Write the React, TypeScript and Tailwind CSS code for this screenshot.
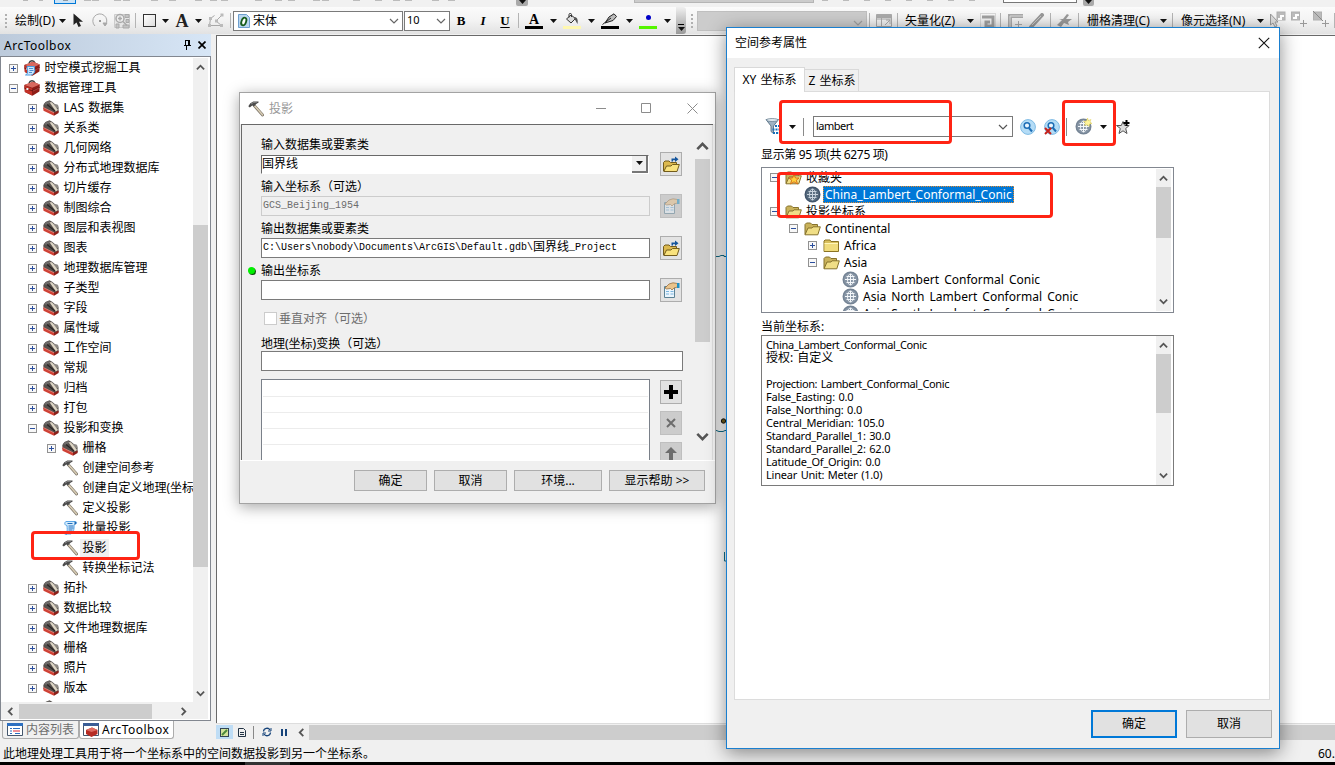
import type { ReactNode } from "react";
import clsx from "clsx";

/* ---------- small shared pieces ---------- */

const Caret = () => (
  <svg width="7" height="4" viewBox="0 0 7 4" className="shrink-0"><path d="M0 0h7L3.5 4z" fill="#111" /></svg>
);

const Chevron = ({ dir, size = 9, color = "#555", sw = 2 }: { dir: "up" | "down" | "left" | "right"; size?: number; color?: string; sw?: number }) => {
  const d = {
    up: "M1 7L5 3L9 7",
    down: "M1 3L5 7L9 3",
    left: "M7 1L3 5L7 9",
    right: "M3 1L7 5L3 9",
  }[dir];
  return (
    <svg width={size} height={size} viewBox="0 0 10 10" className="shrink-0" fill="none" stroke={color} strokeWidth={sw}>
      <path d={d} />
    </svg>
  );
};

const Cell = ({ w, className, children }: { w: string; className?: string; children?: ReactNode }) => (
  <div className={clsx("flex h-full shrink-0 items-center justify-center", w, className)}>{children}</div>
);

const Sep = ({ w = "w-[5px]" }: { w?: string }) => (
  <Cell w={w}><div className="h-[15px] w-px bg-[#b4b4b4]" /></Cell>
);

const Grip = ({ w }: { w: string }) => (
  <Cell w={w}>
    <div className="flex flex-col gap-[2px]">
      {[0, 1, 2, 3].map(i => <div key={i} className="size-[2px] bg-[#b0b0b0]" />)}
    </div>
  </Cell>
);

/* ---------- tree icons ---------- */

const Expander = ({ open }: { open: boolean }) => (
  <svg width="9" height="9" viewBox="0 0 9 9" shapeRendering="crispEdges" className="shrink-0">
    <rect x="0.5" y="0.5" width="8" height="8" fill="#f8f8f8" stroke="#919191" />
    <path d={open ? "M2 4.5h5" : "M2 4.5h5M4.5 2v5"} stroke="#2b4f9e" />
  </svg>
);

const ToolboxIcon = ({ script }: { script?: boolean }) => (
  <svg width="16" height="16" viewBox="0 0 16 16" className="shrink-0">
    <path d="M5 3C6 0 10 0 11 3" fill="none" stroke="#3b3b3b" strokeWidth="1.3" />
    <path d="M0.3 5L9 1.8L15.8 4.6L15.4 11.5L8.5 15.7L0.8 12z" fill="#8f1d17" />
    <path d="M0.3 5L9 1.8L15.8 4.6L8.2 7.8z" fill="#d8695f" />
    <path d="M0.4 5.6L8 8.4V15.4L0.9 12z" fill="#c33127" />
    <path d="M0.4 8L8 10.8L15.7 7.4" stroke="#5c110d" strokeWidth="0.8" fill="none" />
    <rect x="2.4" y="8" width="2" height="2" fill="#eee" />
    <path d="M9 11L15 8" stroke="#b55" strokeWidth="0.7" />
    {script && (
      <>
        <path d="M3 6.5h7.5c-1 2 1 3.5 0 5.5c-1 2-2 3-4 3H1.5c2-1 2.5-2.5 2-4.5z" fill="#cfe8fb" stroke="#4a9be0" strokeWidth="1" />
        <path d="M5 8.5h4M5.5 10.5h4M5 12.5h3" stroke="#3d85cf" strokeWidth="0.9" />
      </>
    )}
  </svg>
);

const ToolsetIcon = () => (
  <svg width="16" height="16" viewBox="0 0 16 16" className="shrink-0">
    <path d="M0.3 5L2.5 2L6.5 0.3L9.5 2L15.5 7.5V12L11 15L0.5 9z" fill="#55504d" />
    <path d="M0.8 4L3.5 1.8L6.5 1L7.5 2.5L4 5z" fill="#6d6a68" />
    <path d="M9 3.500L14.500 4.500L15.500 6V8.500L12 7.500z" fill="#8b8783" />
    <path d="M6.500 2.200L9 2.200L15 10L12.800 11.500z" fill="#ddd5c4" />
    <path d="M4 4.500L12 11" stroke="#2a2625" strokeWidth="1.200" />
    <path d="M0.300 7.500L11 12.800V15.800L0.500 10.800z" fill="#cf4135" />
    <path d="M0.300 7.500L11 12.800" stroke="#e98a80" strokeWidth="0.800" />
    <path d="M11 12.800L15.600 10.500V13L11 15.800z" fill="#8b1e18" />
  </svg>
);

const HammerIcon = () => (
  <svg width="16" height="16" viewBox="0 0 16 16" className="shrink-0">
    <path d="M6.4 4.8L14.6 14" stroke="#7a7266" strokeWidth="2.8" strokeLinecap="round" />
    <path d="M6.4 4.6L14.5 13.8" stroke="#d8cdb4" strokeWidth="1.6" strokeLinecap="round" />
    <path d="M0.300 5.200L2.300 2.200L5.300 0.600L10.500 0.400L10.600 1.600L8.200 3L6 5.600L4.200 4.600L1.800 6.600z" fill="#4b4b4b" />
    <path d="M3 3L5.500 1.500L9 1" stroke="#a5a5a5" strokeWidth="0.700" fill="none" />
  </svg>
);

const ScriptIcon = () => (
  <svg width="16" height="16" viewBox="0 0 16 16" className="shrink-0">
    <path d="M4 1.500H13.500C15.500 2 14.500 4.500 12.500 4.200C11.500 7.500 13 11 9 14H4C6 11 5 8 5 5.500C2.500 5.500 2 2.500 4 1.500z" fill="#d4ebfc" stroke="#5aa6e6" />
    <path d="M2 11.500C1.500 13.500 3 15 5 14.500" fill="none" stroke="#5aa6e6" />
    <path d="M5.500 3.500h5M6.500 6h5M6.500 8h5M6.500 10h4M6.500 12h3" stroke="#2270bd" strokeWidth="1.100" />
    <path d="M12.500 1.500c2.500 0 2.500 3 0 3z" fill="#1f66b0" />
  </svg>
);

const FolderIcon = ({ open, star }: { open?: boolean; star?: boolean }) => (
  <svg width="17" height="14" viewBox="0 0 17 14" className="shrink-0">
    {open ? (
      <>
        <path d="M1 12.5V2.5L2.5 1H6.5L8 2.5H13.5V5" fill="#c9b25a" stroke="#86722c" />
        <path d="M1 12.8L4 6H8L9 4.8H16.3L13.8 12.8z" fill="#f0de86" stroke="#86722c" />
      </>
    ) : (
      <>
        <path d="M1 12.5V2L2 1H7L8 2.5H15.5V12.5z" fill="#d8bf5c" stroke="#8b7424" />
        <path d="M1.5 4.5H15V12H1.5z" fill="#f0dc7c" />
        <path d="M1.5 4.5H15" stroke="#fff6b8" />
      </>
    )}
    {star && <path d="M9 3.500L10.500 7H14L11.300 9.200L12.500 13L9 10.800L5.500 13L6.700 9.200L4 7H7.500z" fill="#ffcf3a" stroke="#d5701a" />}
  </svg>
);

const GlobeIcon = ({ dark, spark }: { dark?: boolean; spark?: boolean }) => (
  <svg width="17" height="17" viewBox="0 0 17 17" className="shrink-0">
    <circle cx="8.500" cy="8.500" r="7.300" fill={dark ? "#566a7d" : "#8795a5"} stroke={dark ? "#41546a" : "#748394"} strokeWidth="1.400" />
    <g fill="none" stroke={dark ? "#c9d4de" : "#f4f7fa"} strokeWidth="1">
      <path d="M8.500 3V14M3 8.500H14M4.500 5.500H12.500M4.500 11.500H12.500" />
      <ellipse cx="8.500" cy="8.500" rx="3" ry="5.500" />
    </g>
    {spark && <path d="M12.5 0L13.4 2.5L16 1.5L15 4L17 5.500L14.500 6L14 8.500L12.200 6.700L9.500 7.500L10.500 5L8.500 3.500L11.500 3z" fill="#fff59a" stroke="#dccb52" strokeWidth="0.500" />}
  </svg>
);

/* ---------- top toolbars ---------- */

// last pixels of the toolbar row above the drawing toolbar
const SPECKS = [8, 22, 9, 28, 18, 26, 15, 11, 34, 20, 13, 25, 9, 31, 22, 18, 12, 27, 16, 24];

const ClippedToolbar = () => (
  <div className="flex h-[7px] shrink-0 items-start bg-[#f1f1f1]">
    <div className="flex h-[2px] w-[54px] gap-[11px] overflow-hidden pl-[23px]">
      <i className="h-px w-[5px] bg-[#b8b8b8]" /><i className="h-px w-[4px] bg-[#bbb]" />
    </div>
    <div className="flex h-[4px] w-[22px] justify-center border border-t-0 border-[#0078d7] bg-[#cce4f7]"><i className="h-px w-[5px] bg-[#8d9ba6]" /></div>
    <div className="flex h-[2px] w-[440px] overflow-hidden pl-2">
      {SPECKS.map((s, i) => (
        <div key={i} style={{ width: s }} className="shrink-0"><div className="h-px w-[7px] bg-[#bcbcbc]" /></div>
      ))}
    </div>
    <div className="flex h-[6px] w-[12px] justify-center rounded-b-[2px] bg-[#aaa]"><Caret /></div>
    <div className="w-[106px]" />
    <div className="h-[3px] w-[180px] border border-t-0 border-[#b5b5b5] bg-[#ccc]" />
    <div className="flex h-[2px] w-[189px] gap-[15px] overflow-hidden pl-2">
      {[0, 1, 2, 3, 4, 5, 6, 7].map(i => <i key={i} className="h-px w-[6px] shrink-0 bg-[#bbb]" />)}
    </div>
    <div className="h-[3px] w-[74px] border border-t-0 border-[#777] bg-white" />
    <div className="w-[6px]" />
    <div className="flex h-[6px] w-[11px] justify-center rounded-b-[2px] bg-[#aaa]"><Caret /></div>
  </div>
);

const DrawToolbar = () => (
  <div className="flex h-[27px] shrink-0 items-center overflow-hidden bg-gradient-to-b from-[#fbfbfb] via-[#f3f3f3] to-[#e2e2e2] text-[12px]">
    <Grip w="w-[12px]" />
    <Cell w="w-[46px]">绘制(D)</Cell>
    <Cell w="w-[9px]"><Caret /></Cell>
    <Cell w="w-[23px]">
      <svg width="11" height="15" viewBox="0 0 11 15"><path d="M0.500 0.500V12L3.500 9.500L5.500 14L8 13L6 8.700H10z" fill="#222" /></svg>
    </Cell>
    <Cell w="w-[20px]">
      <svg width="16" height="16" viewBox="0 0 16 16" fill="none" stroke="#a8a8a8">
        <path d="M3 13A7 7 0 1 1 13.500 12" /><path d="M11 10h4l-2 3z" fill="#a8a8a8" /><rect x="7" y="7" width="2" height="2" fill="#999" stroke="none" />
      </svg>
    </Cell>
    <Cell w="w-[23px]">
      <svg width="16" height="16" viewBox="0 0 16 16" fill="none" stroke="#aaa">
        <path d="M0.500 1.500h15v13h-15z" fill="#e6e6e6" stroke="#ccc" />
        <path d="M11 1.500h4v3h-4zM12 6.500h3v3h-3zM2 11h3v4h-3zM9 12h6v3h-6z" fill="#c4c4c4" />
        <circle cx="6" cy="5.500" r="4" fill="#eee" strokeWidth="1.500" /><path d="M4 5.500h4M6 3.500v4M9 8.500l4 4" strokeWidth="1.500" />
      </svg>
    </Cell>
    <Sep />
    <Cell w="w-[23px]"><div className="h-[13px] w-[13px] border border-[#333] bg-gradient-to-br from-white to-[#ddd]" /></Cell>
    <Cell w="w-[9px]"><Caret /></Cell>
    <Cell w="w-[24px]" className="font-['Liberation_Serif',serif] text-[18px] leading-none font-bold text-[#222]">A</Cell>
    <Cell w="w-[9px]"><Caret /></Cell>
    <Cell w="w-[25px]">
      <svg width="17" height="15" viewBox="0 0 17 15" fill="none" stroke="#a8a8a8">
        <path d="M2.500 12.500L3.500 5.500L7.500 2.500M15 2L9 8L14.500 12.500H2.500" />
        <path d="M1 11h3v3H1zM2 4h3v3H2zM13 11h3v3h-3zM8 6.500h3v3H8zM13.500 0.500h3v3h-3z" fill="#bbb" stroke="none" />
      </svg>
    </Cell>
    <Sep />
    <Cell w="w-[170px]">
      <div className="flex h-[20px] w-full items-center border border-[#7a7a7a] bg-white pr-[3px] pl-[4px]">
        <svg width="12" height="14" viewBox="0 0 12 14" className="shrink-0">
          <path d="M0.500 0.500h8l3 3v10h-11z" fill="#b9d6ef" stroke="#6d9fce" />
          <ellipse cx="5.800" cy="7.500" rx="2.300" ry="4" transform="rotate(20 5.800 7.500)" fill="#fff" stroke="#175c1c" strokeWidth="1.800" />
        </svg>
        <span className="ml-[3px] flex-1">宋体</span>
        <Chevron dir="down" color="#666" sw={1.2} size={10} />
      </div>
    </Cell>
    <Cell w="w-[47px]">
      <div className="ml-px flex h-[20px] w-[46px] items-center border border-[#7a7a7a] bg-white pr-[3px] pl-[2px]">
        <span className="flex-1 pb-px text-[11px]">10</span>
        <Chevron dir="down" color="#666" sw={1.2} size={10} />
      </div>
    </Cell>
    <Cell w="w-[22px]" className="font-['Liberation_Serif',serif] text-[13px] font-bold">B</Cell>
    <Cell w="w-[22px]" className="font-['Liberation_Serif',serif] text-[13px] font-bold italic">I</Cell>
    <Cell w="w-[22px]" className="font-['Liberation_Serif',serif] text-[13px] font-bold underline underline-offset-2">U</Cell>
    <Sep />
    <Cell w="w-[26px]" className="flex-col">
      <span className="h-[13px] font-['Liberation_Serif',serif] text-[14px] leading-[13px] font-bold">A</span>
      <div className="h-[3px] w-[18px] bg-black" />
    </Cell>
    <Cell w="w-[12px]"><Caret /></Cell>
    <Cell w="w-[26px]" className="flex-col">
      <svg width="14" height="13" viewBox="0 0 14 13"><path d="M1.500 6L6 2L10.500 5.500L6 10z" fill="#ddd" stroke="#333" /><path d="M4 4.500V1.500C4 0 6.500 0 6.500 1.500V4" stroke="#333" fill="none" /><path d="M10 4C13 5 13 8 12.500 11C11 9 11 7 9 6z" fill="#555" /></svg>
      <div className="h-[3px] w-[18px] bg-[#fff8b0]" />
    </Cell>
    <Cell w="w-[12px]"><Caret /></Cell>
    <Cell w="w-[26px]" className="flex-col">
      <svg width="16" height="13" viewBox="0 0 16 13"><path d="M3 10L7 4L12 0.800L14.500 3.500L11 7.500z" fill="#bbb" stroke="#222" /><path d="M0.500 11.500L9 5" stroke="#222" /></svg>
      <div className="h-[3px] w-[18px] bg-black" />
    </Cell>
    <Cell w="w-[12px]"><Caret /></Cell>
    <Cell w="w-[26px]" className="flex-col">
      <div className="flex h-[13px] items-start pt-[2px]"><div className="size-[5px] rounded-full bg-[#0000c8]" /></div>
      <div className="h-[3px] w-[18px] bg-[#55f500]" />
    </Cell>
    <Cell w="w-[12px]"><Caret /></Cell>
    <div className="w-[3px] shrink-0" />
    <Cell w="w-[10px]" className="flex-col justify-end gap-[2px] rounded-r-[3px] bg-gradient-to-b from-[#f0f0f0] to-[#999] pb-[3px]">
      <div className="h-px w-[6px] shrink-0 bg-black" /><Caret />
    </Cell>
    <Grip w="w-[11px]" />
    <Cell w="w-[170px]">
      <div className="flex h-[20px] w-full items-center justify-end border border-[#bfbfbf] bg-[#ccc] pt-[5px] pr-[3px]"><Chevron dir="down" color="#a0a0a0" sw={1.2} size={10} /></div>
    </Cell>
    <Sep />
    <Cell w="w-[23px]">
      <svg width="16" height="13" viewBox="0 0 16 13" fill="none" stroke="#aaa"><path d="M0.500 1.500h15v11H0.500zM5.500 4v8M0.500 5h15" /><path d="M0.500 0.500h15v3H0.500z" fill="#aaa" /><path d="M9 11l5-5M10 6h4v4" /></svg>
    </Cell>
    <Sep />
    <Cell w="w-[63px]" className="justify-start pl-[5px]">矢量化(Z)</Cell>
    <Cell w="w-[14px]"><Caret /></Cell>
    <Cell w="w-[21px]">
      <svg width="16" height="16" viewBox="0 0 16 16" fill="none"><rect x="0.500" y="0.500" width="15" height="15" stroke="#bbb" strokeDasharray="1 1" /><path d="M2 4h11v9H6V9h4" stroke="#a0a0a0" strokeWidth="3" /></svg>
    </Cell>
    <Sep />
    <Cell w="w-[23px]">
      <svg width="16" height="16" viewBox="0 0 16 16" fill="none"><path d="M3 16V3h13" stroke="#aaa" strokeWidth="4" /><path d="M3 16V3h13" stroke="#ddd" /><path d="M8 11.500h7M11.500 8v7" stroke="#aaa" /></svg>
    </Cell>
    <Cell w="w-[22px]">
      <svg width="16" height="16" viewBox="0 0 16 16" fill="none"><path d="M2 14L13 2" stroke="#999" strokeWidth="4" strokeLinecap="round" /><path d="M3 12L12 3" stroke="#c8c8c8" strokeWidth="1" /></svg>
    </Cell>
    <Sep />
    <Cell w="w-[23px]">
      <svg width="16" height="14" viewBox="0 0 16 14" fill="#9a9a9a"><path d="M0 11L5 6L2 5H6L10 0L12 1L9 5H15L11 8L12 11L7 9L4 13z" /></svg>
    </Cell>
    <Sep />
    <Cell w="w-[76px]" className="justify-start pl-[6px]">栅格清理(C)</Cell>
    <Cell w="w-[13px]"><Caret /></Cell>
    <Sep />
    <Cell w="w-[78px]" className="justify-start pl-[6px]">像元选择(N)</Cell>
    <Cell w="w-[14px]"><Caret /></Cell>
    <Cell w="w-[21px]" className="pb-1">
      <svg width="16" height="16" viewBox="0 0 16 16" fill="none" stroke="#b0b0b0"><rect x="7" y="1" width="8" height="8" fill="#bbb" /><path d="M8 8h3V5h3" stroke="#fff" strokeWidth="2" /><path d="M0.500 3V14L3 12L5 16L7 15L5 11H8z" fill="#ddd" stroke="#999" /></svg>
    </Cell>
    <Cell w="w-[22px]" className="pb-1">
      <svg width="16" height="16" viewBox="0 0 16 16" fill="none" stroke="#b0b0b0"><rect x="0.500" y="1" width="8" height="8" fill="#bbb" /><path d="M2 7h3V4h3" stroke="#fff" strokeWidth="2" /><path d="M9 12.500h7M12.500 9v7" stroke="#999" /></svg>
    </Cell>
    <Cell w="w-[22px]" className="pb-1">
      <svg width="16" height="16" viewBox="0 0 16 16" fill="none" stroke="#b0b0b0"><rect x="0.500" y="1" width="8" height="8" fill="#bbb" /><path d="M0 0L10 10" stroke="#888" /><path d="M9 12.500h7M12.500 9v7" stroke="#999" /></svg>
    </Cell>
    <Cell w="w-[3px]" className="justify-end"><div className="h-[15px] w-px bg-[#b4b4b4]" /></Cell>
  </div>
);

/* ---------- left panel ---------- */

type Row = { level: number; kind: "box" | "sbox" | "set" | "tool" | "script"; text: string; open?: boolean; selected?: boolean };

const set = (text: string, level = 1): Row => ({ level, kind: "set", text });
const tool = (text: string): Row => ({ level: 2, kind: "tool", text });

const ROWS: Row[] = [
  { level: 0, kind: "sbox", text: "时空模式挖掘工具" },
  { level: 0, kind: "box", text: "数据管理工具", open: true },
  set("LAS 数据集"), set("关系类"), set("几何网络"), set("分布式地理数据库"), set("切片缓存"),
  set("制图综合"), set("图层和表视图"), set("图表"), set("地理数据库管理"), set("子类型"),
  set("字段"), set("属性域"), set("工作空间"), set("常规"), set("归档"), set("打包"),
  { level: 1, kind: "set", text: "投影和变换", open: true },
  set("栅格", 2),
  tool("创建空间参考"), tool("创建自定义地理(坐标"), tool("定义投影"),
  { level: 2, kind: "script", text: "批量投影" },
  { level: 2, kind: "tool", text: "投影", selected: true },
  tool("转换坐标记法"),
  set("拓扑"), set("数据比较"), set("文件地理数据库"), set("栅格"), set("照片"), set("版本"), set(""),
];

const INDENT = 19;

const TreeRow = ({ row }: { row: Row }) => (
  <div className="flex h-[20px] shrink-0 items-center" style={{ paddingLeft: 8 + row.level * INDENT }}>
    <div className="flex w-[15px] shrink-0 items-center">
      {row.text && row.kind !== "tool" && row.kind !== "script" && <Expander open={!!row.open} />}
    </div>
    {row.kind === "set" && <ToolsetIcon />}
    {row.kind === "box" && <ToolboxIcon />}
    {row.kind === "sbox" && <ToolboxIcon script />}
    {row.kind === "tool" && <HammerIcon />}
    {row.kind === "script" && <ScriptIcon />}
    <span className={clsx("ml-[2px] h-[18px] pr-[2px] pl-[2.5px] leading-[18px] whitespace-nowrap [word-spacing:1px]", row.selected && "bg-[#f0f0f0]")}>{row.text}</span>
  </div>
);

const Toolbox = () => (
  <div className="flex w-[211px] shrink-0 flex-col">
    <div className="flex h-[22px] items-center bg-gradient-to-r from-[#bccadb] to-[#d7e6f6] pr-[5px] pl-[4px]">
      <span className="flex-1 pt-[2px] text-[12px] tracking-[0.5px]">ArcToolbox</span>
      <svg width="8" height="10" viewBox="0 0 8 10" fill="none" stroke="#000" shapeRendering="crispEdges"><path d="M2 5V0.500h4V5M0.500 5.500h7M3.500 6v4M5.500 1v4" /></svg>
      <svg width="8" height="8" viewBox="0 0 8 8" className="ml-[7px]" stroke="#000" strokeWidth="1.700"><path d="M0.500 0.500l7 7M7.500 0.500l-7 7" /></svg>
    </div>
    <div className="flex h-[665px] flex-col border border-[#828790] bg-white">
      <div className="flex h-[645px] pt-px">
        <div className="flex w-[192px] shrink-0 flex-col overflow-hidden">
          {ROWS.map((r, i) => <TreeRow key={i} row={r} />)}
        </div>
        <div className="flex w-[15px] flex-col items-center bg-[#f0f0f0]">
          <div className="flex h-[167px] pt-[5px]"><Chevron dir="up" size={9} /></div>
          <div className="h-[342px] w-full bg-[#cdcdcd]" />
          <div className="flex flex-1 items-end pb-[4px]"><Chevron dir="down" size={9} /></div>
        </div>
      </div>
      <div className="mr-[2px] flex h-[17px] items-center bg-[#f0f0f0] pt-px">
        <div className="flex w-[18px] justify-center"><Chevron dir="left" size={9} /></div>
        <div className="h-[15px] w-[133px] bg-[#cdcdcd]" />
        <div className="flex w-[41px] justify-end pr-[5px]"><Chevron dir="right" size={9} /></div>
      </div>
    </div>
    <div className="flex h-[19px] items-start pl-[2px]">
      <div className="flex h-[18px] w-[77px] items-center rounded-b-[3px] border border-t-0 border-[#acacac] pl-[4px] text-[#6d6d6d]">
        <svg width="16" height="13" viewBox="0 0 16 13" className="shrink-0"><path d="M0.500 0.500h15v12H0.500z" fill="#fff" stroke="#44566c" /><path d="M0 0h16v3H0z" fill="#2d6fc0" /><path d="M3 5.500h2M3 8h2M3 10.500h2" stroke="#2d6fc0" /><path d="M6 5.500h7M8 10.500h5" stroke="#2d6fc0" /><path d="M6 8h7" stroke="#d23" /></svg>
        <span className="ml-[3px] whitespace-nowrap">内容列表</span>
      </div>
      <div className="flex h-[18px] w-[95px] items-center rounded-b-[3px] border border-t-0 border-[#acacac] bg-white pl-[3px]">
        <svg width="16" height="14" viewBox="0 0 16 14" className="shrink-0"><path d="M0.500 0.500h15v12H0.500z" fill="#fff" stroke="#44566c" /><path d="M0 0h16v3H0z" fill="#3a5d96" /><path d="M3 7L9 4.500L14.500 7V11L8.500 14L3 11z" fill="#b62c24" /><path d="M3 7L9 4.500L14.500 7L8.500 9z" fill="#dd6a60" /></svg>
        <span className="ml-[3px] tracking-[0.5px]">ArcToolbox</span>
      </div>
    </div>
  </div>
);

/* ---------- map area ---------- */

const MapView = () => (
  <div className="flex min-w-0 flex-1 flex-col">
    <div className="mt-px flex-1 border-t border-l border-[#696969] bg-white">
      <svg width="1118" height="686" viewBox="217 36 1118 686" fill="none" stroke="#0e6f8c">
        <path d="M715 256.500h4l2-1h3v1h4M715 430l4 1.500h4l2-1h2M724.500 552v9h3" />
        <circle cx="723.500" cy="421" r="2.200" fill="#75601a" stroke="#111" />
      </svg>
    </div>
    <div className="flex h-[17px] shrink-0 items-center border-t border-[#ddd]">
      <div className="flex h-[14px] w-[17px] items-center justify-center bg-[#bfddf5]">
        <svg width="9" height="9" viewBox="0 0 9 9"><rect x="0.500" y="0.500" width="8" height="8" fill="#d3e39c" stroke="#345" /><path d="M2 7L7 2" stroke="#4c8a3c" strokeWidth="2" /></svg>
      </div>
      <div className="flex w-[18px] justify-center">
        <svg width="8" height="9" viewBox="0 0 8 9" fill="none" stroke="#234"><path d="M0.500 0.500h5l2 2v6h-7zM2 4.500h4M2 6.500h4" /></svg>
      </div>
      <div className="ml-[2px] h-[13px] w-px bg-[#888]" />
      <svg width="10" height="10" viewBox="0 0 10 10" className="ml-[8px]" fill="none" stroke="#17447a" strokeWidth="1.300"><path d="M1.500 4.500A3.500 3.500 0 0 1 8 3M8.500 5.500A3.500 3.500 0 0 1 2 7" /><path d="M9 1v3H6M1 9V6h3" strokeWidth="1" /></svg>
      <svg width="6" height="7" viewBox="0 0 6 7" className="ml-[9px]" fill="#17447a"><path d="M0 0h2v7H0zM4 0h2v7H4z" /></svg>
      <div className="ml-[10px]"><Chevron dir="left" size={9} /></div>
      <div className="ml-[3px] h-[15px] flex-1 bg-[#cdcdcd]" />
    </div>
  </div>
);

/* ---------- projection dialog ---------- */

const OpenButton = () => (
  <div className="flex h-[24px] w-[22px] shrink-0 items-center justify-center border border-[#adadad] bg-[#e3e3e3]">
    <svg width="17" height="17" viewBox="0 0 17 17" className="shrink-0">
      <path d="M0.500 15V6.500L2 5H6L7.500 6.500H13.500V9" fill="#dcb94f" stroke="#735c1c" />
      <path d="M0.800 15.500L3.500 10H8L9.500 8.500H16.300L14 15.500z" fill="#f9e27d" stroke="#735c1c" />
      <path d="M8.500 5.500V2.500H12V0.500L15.500 3.300L12 6V4.300H10V5.500z" fill="#14559c" />
    </svg>
  </div>
);

const PropButton = ({ disabled }: { disabled?: boolean }) => (
  <div className={clsx("flex h-[24px] w-[22px] shrink-0 items-center justify-center border", disabled ? "border-[#bfbfbf] bg-[#ccc]" : "border-[#adadad] bg-[#e3e3e3]")}>
    <svg width="17" height="16" viewBox="0 0 17 16" className={clsx("shrink-0", disabled && "opacity-50")}>
      <path d="M1.500 4.500h10v11h-10z" fill="#eaf5fd" stroke="#5c8295" />
      <path d="M3 9.500h3M3 12h3M7.500 9.500h3M7.500 12h3" stroke="#7bb4de" />
      <path d="M2 6L6 2L10 0.800L14.500 1.500V5L11 6L9 8L7.500 6.500L3.500 7z" fill="#eac48c" stroke="#8d6330" strokeWidth="0.700" />
      <path d="M14 1h2.500v5H14z" fill="#1e90c4" />
    </svg>
  </div>
);

const Field = ({ label, button, required, children }: { label: string; button: ReactNode; required?: boolean; children: ReactNode }) => (
  <div className="flex h-[42px] shrink-0 flex-col">
    <div className="flex h-[15px] items-center leading-[15px]">
      <div className="flex w-[19px] shrink-0 items-center pl-[6px]">
        {required && <div className="size-[7px] rounded-full bg-[#00f000] shadow-[1px_1px_0_#064a06]" />}
      </div>
      <span>{label}</span>
    </div>
    <div className="flex h-[24px] items-center pl-[19px]">
      <div className="mr-[10px] flex w-[389px] shrink-0">{children}</div>
      {button}
    </div>
  </div>
);

const DlgButton = ({ w, children }: { w: string; children: ReactNode }) => (
  <div className={clsx("flex h-[21px] items-center justify-center border border-[#adadad] bg-[#e1e1e1] pt-px", w)}>{children}</div>
);

const ProjectDialog = () => (
  <div className="absolute top-[92px] left-[239px] flex h-[412px] w-[477px] flex-col border border-[#a3a3a3] bg-[#f0f0f0] shadow-[0_3px_14px_rgba(0,0,0,0.35)]">
    <div className="flex h-[31px] shrink-0 items-center bg-white pr-[17px] pl-[8px] text-[#999]">
      <HammerIcon />
      <span className="ml-[5px] flex-1">投影</span>
      <svg width="102" height="11" viewBox="0 0 102 11" fill="none" stroke="#8c8c8c">
        <path d="M0 5.500h10M45.500 0.500h9v9h-9zM91.500 0.500l10 10M101.500 0.500l-10 10" />
      </svg>
    </div>
    <div className="mr-[2px] ml-px flex h-[336px] shrink-0 border-t border-l border-[#696969]">
      <div className="flex w-[453px] shrink-0 flex-col overflow-hidden pt-[12px]">
        <Field label="输入数据集或要素类" button={<OpenButton />}>
          <div className="flex h-[19px] w-[388px] items-center border border-[#696969] border-r-white border-b-white bg-white">
            <span className="flex-1">国界线</span>
            <div className="flex h-full w-[16px] items-center justify-center border-r-2 border-b-2 border-[#777] bg-[#f0f0f0]"><Caret /></div>
          </div>
        </Field>
        <Field label="输入坐标系（可选）" button={<PropButton disabled />}>
          <div className="flex h-[20px] w-full items-center border border-[#ccc] pl-px font-['Liberation_Mono','Noto_Sans_CJK_SC',monospace] text-[10px] text-[#6d6d6d]">GCS_Beijing_1954</div>
        </Field>
        <Field label="输出数据集或要素类" button={<OpenButton />}>
          <div className="flex h-[20px] w-full items-center border border-[#7a7a7a] bg-white pl-px whitespace-pre font-['Liberation_Mono','Noto_Sans_CJK_SC',monospace] text-[10px]">C:\Users\nobody\Documents\ArcGIS\Default.gdb\<span className="text-[12px]">国界线</span>_Project</div>
        </Field>
        <Field label="输出坐标系" button={<PropButton />} required>
          <div className="h-[20px] w-full border border-[#7a7a7a] bg-white" />
        </Field>
        <div className="mt-[6px] flex h-[15px] shrink-0 items-center pl-[22px] text-[#6d6d6d]">
          <div className="size-[13px] border border-[#ccc] bg-white" />
          <span className="ml-[2px]">垂直对齐（可选）</span>
        </div>
        <div className="mt-[10px] h-[15px] shrink-0 pl-[19px] leading-[15px]">地理(坐标)变换（可选）</div>
        <div className="ml-[19px] h-[20px] w-[422px] shrink-0 border border-[#7a7a7a] bg-white" />
        <div className="mt-[8px] flex shrink-0 pl-[19px]">
          <div className="h-[100px] w-[389px] shrink-0 border border-[#7a8089] bg-white px-px pt-px">
            {[0, 1, 2, 3, 4].map(i => <div key={i} className="h-[16px] border-b border-[#ececec]" />)}
          </div>
          <div className="ml-[10px] flex flex-col gap-[7px] pt-px">
            <div className="flex h-[24px] w-[22px] items-center justify-center border border-[#adadad] bg-[#e1e1e1]">
              <svg width="14" height="14" viewBox="0 0 14 14"><path d="M7 0v14M0 7h14" stroke="#000" strokeWidth="4" /></svg>
            </div>
            <div className="flex h-[24px] w-[22px] items-center justify-center border border-[#bfbfbf] bg-[#ccc]">
              <svg width="10" height="10" viewBox="0 0 10 10"><path d="M1 1l8 8M9 1l-8 8" stroke="#6d6d6d" strokeWidth="2" /></svg>
            </div>
            <div className="flex h-[24px] w-[22px] items-center justify-center border border-[#bfbfbf] bg-[#ccc]">
              <svg width="12" height="14" viewBox="0 0 12 14"><path d="M6 0L12 6H8V14H4V6H0z" fill="#6d6d6d" /></svg>
            </div>
          </div>
        </div>
      </div>
      <div className="flex w-[15px] shrink-0 flex-col items-center">
        <div className="h-[34px] pt-[15px]"><Chevron dir="up" size={13} /></div>
        <div className="h-[183px] w-full shrink-0 bg-[#cdcdcd]" />
        <div className="pt-[88px]"><Chevron dir="down" size={13} /></div>
      </div>
      <div className="ml-[2px] w-px bg-[#dcdcdc]" />
    </div>
    <div className="h-px shrink-0 bg-white" />
    <div className="flex gap-[7px] pt-[9px] pl-[114px]">
      <DlgButton w="w-[73px]">确定</DlgButton>
      <DlgButton w="w-[73px]">取消</DlgButton>
      <DlgButton w="w-[88px]">环境...</DlgButton>
      <DlgButton w="w-[96px]">显示帮助 &gt;&gt;</DlgButton>
    </div>
  </div>
);

/* ---------- spatial reference dialog ---------- */

type CsRow = { level: number; icon: ReactNode; text: string; open?: boolean; selected?: boolean };

const CS_ROWS: CsRow[] = [
  { level: 0, icon: <FolderIcon open star />, text: "收藏夹", open: true },
  { level: 1, icon: <GlobeIcon dark />, text: "China_Lambert_Conformal_Conic", selected: true },
  { level: 0, icon: <FolderIcon open />, text: "投影坐标系", open: true },
  { level: 1, icon: <FolderIcon open />, text: "Continental", open: true },
  { level: 2, icon: <FolderIcon />, text: "Africa", open: false },
  { level: 2, icon: <FolderIcon open />, text: "Asia", open: true },
  { level: 3, icon: <GlobeIcon />, text: "Asia Lambert Conformal Conic" },
  { level: 3, icon: <GlobeIcon />, text: "Asia North Lambert Conformal Conic" },
  { level: 3, icon: <GlobeIcon />, text: "Asia South Lambert Conformal Conic" },
];

const DETAILS = [
  "China_Lambert_Conformal_Conic", "授权: 自定义", "",
  "Projection: Lambert_Conformal_Conic", "False_Easting: 0.0", "False_Northing: 0.0",
  "Central_Meridian: 105.0", "Standard_Parallel_1: 30.0", "Standard_Parallel_2: 62.0",
  "Latitude_Of_Origin: 0.0", "Linear Unit: Meter (1.0)",
];

const VScroll = ({ thumb }: { thumb: string }) => (
  <div className="mr-[2px] flex w-[15px] shrink-0 flex-col items-center bg-[#f0f0f0]">
    <div className="h-[18px] pt-[5px]"><Chevron dir="up" size={9} /></div>
    <div className={clsx("w-full bg-[#cdcdcd]", thumb)} />
    <div className="flex flex-1 items-end pb-[5px]"><Chevron dir="down" size={9} /></div>
  </div>
);

const SearchIcon = ({ clear }: { clear?: boolean }) => (
  <svg width="16" height="16" viewBox="0 0 16 16" className="shrink-0">
    <circle cx="8" cy="8" r="7.400" fill="#b4dcf6" stroke="#7fbbe4" />
    <circle cx="7" cy="6.500" r="2.800" fill="#e9f6ff" stroke="#1c6db5" strokeWidth="1.500" />
    <path d="M9 9l3 3.500" stroke="#1c6db5" strokeWidth="2" />
    {clear && <path d="M1 9l6 6M7 9l-6 6" stroke="#c5201a" strokeWidth="2" />}
  </svg>
);

const ReferenceDialog = () => (
  <div className="absolute top-[27px] left-[726px] flex h-[722px] w-[554px] flex-col border border-[#1a7fcf] bg-[#f0f0f0] shadow-[0_4px_18px_rgba(0,0,0,0.45)]">
    <div className="flex h-[30px] shrink-0 items-center justify-between bg-white pr-[9px] pl-[8px]">
      <span>空间参考属性</span>
      <svg width="12" height="12" viewBox="0 0 12 12" stroke="#111" strokeWidth="1.100"><path d="M0.800 0.800l10.400 10.400M11.200 0.800L0.800 11.200" /></svg>
    </div>
    <div className="mt-[9px] flex h-[24px] shrink-0 items-end pl-[7px]">
      <div className="z-10 -mb-px flex h-[25px] w-[71px] items-center justify-center border border-b-0 border-[#d9d9d9] bg-white pb-px [word-spacing:1px]">XY 坐标系</div>
      <div className="flex h-[22px] w-[54px] items-center justify-center border border-b-0 border-l-0 border-[#d9d9d9] bg-[#f0f0f0] pl-px [word-spacing:1px]">Z 坐标系</div>
    </div>
    <div className="ml-[7px] flex h-[609px] w-[536px] shrink-0 flex-col border border-[#dcdcdc] bg-white pl-[26px]">
      <div className="mt-[24px] flex h-[21px] items-center">
        <svg width="16" height="17" viewBox="0 0 16 17" className="ml-[4px]">
          <path d="M1 1.500H13.500L8.500 8V15.500L6 13.500V8z" fill="#9eb2c2" stroke="#647b8e" /><ellipse cx="7.200" cy="2" rx="6" ry="1.500" fill="#dfe8ee" stroke="#647b8e" strokeWidth="0.700" />
          <path d="M10 7h2v2h-2zM13 7h2v2h-2zM7.500 10.500h2v2h-2zM10.500 10.500h2v2h-2zM13.500 10.500h2v2h-2zM8 14h2v2H8zM11 14h2v2h-2zM13.800 14h2v2h-2z" fill="#1a6fb8" />
        </svg>
        <div className="ml-[8px]"><Caret /></div>
        <div className="ml-[7px] h-[18px] w-px bg-[#8a8a8a]" />
        <div className="ml-[9px] flex h-[21px] w-[200px] items-center border border-[#7a7a7a] bg-white pr-[4px] pl-[2px]">
          <span className="flex-1 pb-px text-[11px] tracking-[-0.5px]">lambert</span>
          <Chevron dir="down" color="#555" sw={1.2} size={10} />
        </div>
        <div className="ml-[7px]"><SearchIcon /></div>
        <div className="ml-[8px]"><SearchIcon clear /></div>
        <div className="ml-[6px] h-[18px] w-px bg-[#8a8a8a]" />
        <div className="ml-[8px]"><GlobeIcon spark /></div>
        <div className="ml-[8px]"><Caret /></div>
        <svg width="17" height="16" viewBox="0 0 17 16" className="ml-[8px]">
          <path d="M8 2.500L9.700 6.500H14.200L10.700 9.500L12 14.500L8 11.800L4 14.500L5.300 9.500L1.500 6.500H6.300z" fill="#ddd" stroke="#555" />
          <path d="M11.500 1v6M8.500 4h6" stroke="#000" strokeWidth="2" />
        </svg>
      </div>
      <div className="mt-[9px] flex h-[17px] items-center tracking-[-0.35px]">显示第 95 项(共 6275 项)</div>
      <div className="mt-[4px] flex h-[146px] w-[413px] shrink-0 border border-[#828790] bg-white py-px">
        <div className="flex min-w-0 flex-1 flex-col overflow-hidden">
          {CS_ROWS.map((r, i) => (
            <div key={i} className="flex h-[17px] shrink-0 items-center" style={{ paddingLeft: 8 + r.level * INDENT }}>
              <div className="flex w-[15px] shrink-0 items-center">{r.open !== undefined && <Expander open={r.open} />}</div>
              <div className="flex w-[17px] justify-center">{r.icon}</div>
              <span className={clsx("ml-[2px] h-[17px] px-[2px] leading-[18px] whitespace-nowrap [word-spacing:2px]", r.selected && "bg-[#0078d7] text-white outline-1 -outline-offset-1 outline-dotted outline-[#e68a2e]")}>{r.text}</span>
            </div>
          ))}
        </div>
        <VScroll thumb="h-[51px]" />
      </div>
      <div className="mt-[6px] flex h-[15px] items-center">当前坐标系:</div>
      <div className="mt-px flex h-[151px] w-[413px] shrink-0 border border-[#7a7a7a] bg-white">
        <div className="flex-1 pt-[2px] pl-[4px] font-['Noto_Sans','Noto_Sans_CJK_SC',sans-serif] text-[11px] tracking-[-0.36px] [word-spacing:1px]">
          {DETAILS.map((d, i) => (
            <div key={i} className={clsx("h-[13px] leading-[13px]", i === 1 && "text-[12px] tracking-normal", i > 3 && "tracking-[-0.22px]")}>{d}</div>
          ))}
        </div>
        <VScroll thumb="h-[59px]" />
      </div>
    </div>
    <div className="flex justify-end gap-[9px] pt-[10px] pr-[7px]">
      <div className="flex h-[28px] w-[86px] items-center justify-center border-2 border-[#0078d7] bg-[#e1e1e1]">确定</div>
      <div className="flex h-[28px] w-[86px] items-center justify-center border border-[#adadad] bg-[#e1e1e1]">取消</div>
    </div>
  </div>
);

const Mark = ({ className }: { className: string }) => (
  <div className={clsx("absolute rounded-[4px] border-3 border-[#ff2414]", className)} />
);

export default function App() {
  return (
    <div className="relative flex h-[765px] w-[1335px] flex-col overflow-hidden bg-[#f0f0f0] font-['Noto_Sans','Noto_Sans_CJK_SC',sans-serif] text-[12px] leading-[16px] text-black">
      <ClippedToolbar />
      <DrawToolbar />
      <div className="flex h-[706px] shrink-0 gap-[5px]">
        <Toolbox />
        <MapView />
      </div>
      <div className="flex h-[22px] shrink-0 items-center justify-between overflow-hidden pt-[5px] pl-[3px]">
        <span>此地理处理工具用于将一个坐标系中的空间数据投影到另一个坐标系。</span>
        <span className="w-[17px] whitespace-nowrap">60.</span>
      </div>
      <div className="flex flex-1 bg-black"><div className="ml-[245px] w-[45px] bg-[#333]" /></div>

      <ProjectDialog />
      <ReferenceDialog />

      <Mark className="top-[531px] left-[31px] h-[29px] w-[109px]" />
      <Mark className="top-[100px] left-[779px] h-[44px] w-[173px]" />
      <Mark className="top-[100px] left-[1062px] h-[46px] w-[54px]" />
      <Mark className="top-[172px] left-[777px] h-[46px] w-[276px]" />
    </div>
  );
}
